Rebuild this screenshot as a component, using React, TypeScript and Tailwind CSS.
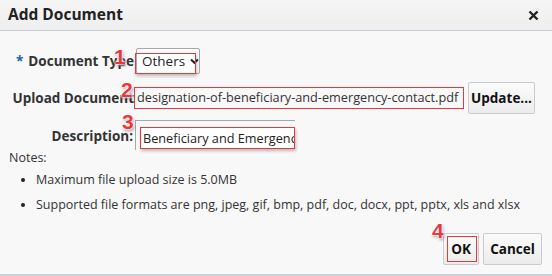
const font = "font-['Open_Sans','Noto_Sans',sans-serif]";

function Badge({ n, className = '' }: { n: string; className?: string }) {
  return (
    <span
      className={`absolute font-['Liberation_Sans',Arial,sans-serif] text-[21px] leading-none font-semibold text-[#e8383d] [text-shadow:0_0_1px_#fff,0_0_2px_#fff,0_0_2px_#fff,0_0_3px_#fff,1px_2px_3px_rgba(0,0,0,0.45)] ${className}`}
    >
      {n}
    </span>
  );
}

function Mark({ className = '' }: { className?: string }) {
  return (
    <span
      className={`absolute border border-[#e8383d] shadow-[1px_2px_3px_rgba(0,0,0,0.25)] pointer-events-none ${className}`}
    />
  );
}

function Btn({ children, className = '' }: { children: React.ReactNode; className?: string }) {
  return (
    <button
      className={`h-[32px] rounded-[2px] border border-[#c8ccd0] bg-gradient-to-b from-[#fbfbfb] to-[#ececec] text-[13.5px] font-bold text-[#111] ${className}`}
    >
      {children}
    </button>
  );
}

export default function App() {
  return (
    <div className={`${font} w-[552px] h-[276px] bg-[#f8f8f8] text-[#333] relative overflow-hidden border-b-2 border-[#c9d0d8]`}>
      {/* header */}
      <div className="h-[31px] flex items-center justify-between pl-[8px] pr-[13px] bg-gradient-to-b from-[#f5f5f5] to-[#eeeeee] border-b border-[#c6ced8]">
        <span className="text-[15.5px] font-bold text-[#222]">Add Document</span>
        <svg width="11" height="11" viewBox="0 0 11 11">
          <path d="M1.5 1.5 L9.5 9.5 M9.5 1.5 L1.5 9.5" stroke="#222" strokeWidth="2.4" />
        </svg>
      </div>

      {/* form */}
      <div className="pt-[17px]">
        <div className="flex items-center h-[26px]">
          <div className="w-[134px] shrink-0 text-right text-[13.5px] font-bold text-[#333] whitespace-nowrap">
            <span className="text-[#1f5fa8] mr-[5px]">*</span>Document Type
          </div>
          <div className="relative ml-[2px]">
            <div className="w-[64px] h-[26px] bg-white border border-[#a8a8a8] rounded-[2px] flex items-center pl-[5px] text-[13.5px] text-[#222]">
              Others
              <svg className="ml-[5px]" width="9" height="7" viewBox="0 0 9 7">
                <path d="M1 1.5 L4.5 5 L8 1.5" stroke="#222" strokeWidth="2" fill="none" />
              </svg>
            </div>
            <Mark className="left-[-1px] top-[5px] w-[61px] h-[21px]" />
          </div>
        </div>
        <Badge n="1" className="left-[114px] top-[46px]" />

        <div className="flex items-center h-[28px] mt-[10px]">
          <div className="w-[134px] shrink-0 text-right text-[13.5px] font-bold text-[#333] whitespace-nowrap">
            Upload Document
          </div>
          <div className="relative w-[330px] h-[22px] flex items-center pl-[3px] text-[12.7px] text-[#333] whitespace-nowrap overflow-hidden">
            designation-of-beneficiary-and-emergency-contact.pdf
            <Mark className="inset-0" />
          </div>
          <Btn className="ml-[4px] w-[67px] h-[28px]">Update...</Btn>
        </div>
        <Badge n="2" className="left-[121px] top-[79px]" />

        <div className="flex items-start h-[30px] mt-[8px]">
          <div className="w-[135px] shrink-0 text-right pr-[2px] pt-[6px] text-[13.5px] font-bold text-[#333]">
            Description:
          </div>
          <div className="relative w-[160px] h-[30px] border-t border-l border-[#a8a8a8]">
            <div className="absolute left-[5px] top-[7px] w-[154px] h-[21px] bg-white flex items-center pl-[2px] text-[12.7px] text-[#222] whitespace-nowrap overflow-hidden">
              Beneficiary and Emergency
            </div>
            <Mark className="left-[4px] top-[6px] w-[155px] h-[22px]" />
          </div>
        </div>
        <Badge n="3" className="left-[122px] top-[111px]" />

        <div className="pl-[9px] text-[12.5px] leading-[16px] text-[#333]">Notes:</div>
        <ul className="mt-[6px] pl-[36px] text-[12.5px] leading-[16px] text-[#333] list-disc marker:text-[#222] space-y-[9px]">
          <li>Maximum file upload size is 5.0MB</li>
          <li>Supported file formats are png, jpeg, gif, bmp, pdf, doc, docx, ppt, pptx, xls and xlsx</li>
        </ul>

        <div className="flex justify-end gap-[4px] pr-[10px] mt-[20px]">
          <div className="relative">
            <Btn className="w-[36px]">OK</Btn>
            <Mark className="left-[4px] top-[3px] w-[30px] h-[26px] shadow-none" />
          </div>
          <Btn className="w-[59px]">Cancel</Btn>
        </div>
        <Badge n="4" className="left-[432px] top-[220px]" />
      </div>
    </div>
  );
}
